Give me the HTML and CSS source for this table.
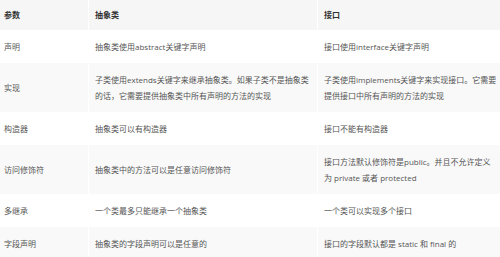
FILE: index.html
```html
<!DOCTYPE html>
<html lang="zh-CN">

<head>
  <meta charset="UTF-8" />
  <title>抽象类与接口</title>
  <link rel="stylesheet" href="styles.css">
</head>

<body>
  <table class="compare">
    <thead>
      <tr>
        <th class="col-param">参数</th>
        <th class="col-abstract">抽象类</th>
        <th>接口</th>
      </tr>
    </thead>
    <tbody>
      <tr>
        <td>声明</td>
        <td>抽象类使用abstract关键字声明</td>
        <td>接口使用interface关键字声明</td>
      </tr>
      <tr>
        <td>实现</td>
        <td>子类使用extends关键字来继承抽象类。如果子类不是抽象类的话，它需要提供抽象类中所有声明的方法的实现</td>
        <td>子类使用implements关键字来实现接口。它需要提供接口中所有声明的方法的实现</td>
      </tr>
      <tr>
        <td>构造器</td>
        <td>抽象类可以有构造器</td>
        <td>接口不能有构造器</td>
      </tr>
      <tr>
        <td>访问修饰符</td>
        <td>抽象类中的方法可以是任意访问修饰符</td>
        <td>接口方法默认修饰符是public。并且不允许定义为 private 或者 protected</td>
      </tr>
      <tr>
        <td>多继承</td>
        <td>一个类最多只能继承一个抽象类</td>
        <td>一个类可以实现多个接口</td>
      </tr>
      <tr>
        <td>字段声明</td>
        <td>抽象类的字段声明可以是任意的</td>
        <td>接口的字段默认都是 static 和 final 的</td>
      </tr>
    </tbody>
  </table>
</body>

</html>
```

FILE: styles.css
```css
body {
  margin: 0;
  background-color: white;
  font-family: "Open Sans", "Noto Sans CJK SC", sans-serif;
  font-size: 8px;
  color: #555;
  overflow: hidden;
}

.compare {
  width: 504px;
  margin-left: -2px;
  border-collapse: collapse;
  table-layout: fixed;
}

.compare th,
.compare td {
  text-align: left;
  vertical-align: middle;
  line-height: 16px;
  padding: 8.5px 3px 8.5px 6px;
  border-right: 1px solid white;
}

.compare th {
  padding-top: 7px;
  padding-bottom: 7px;
  font-weight: bold;
  color: #333;
  background-color: #f6f6f6;
}

.compare .col-param {
  width: 81px;
}

.compare .col-abstract {
  width: 219px;
}

.compare tbody tr:nth-child(even) td {
  background-color: #f9f9f9;
}
```
